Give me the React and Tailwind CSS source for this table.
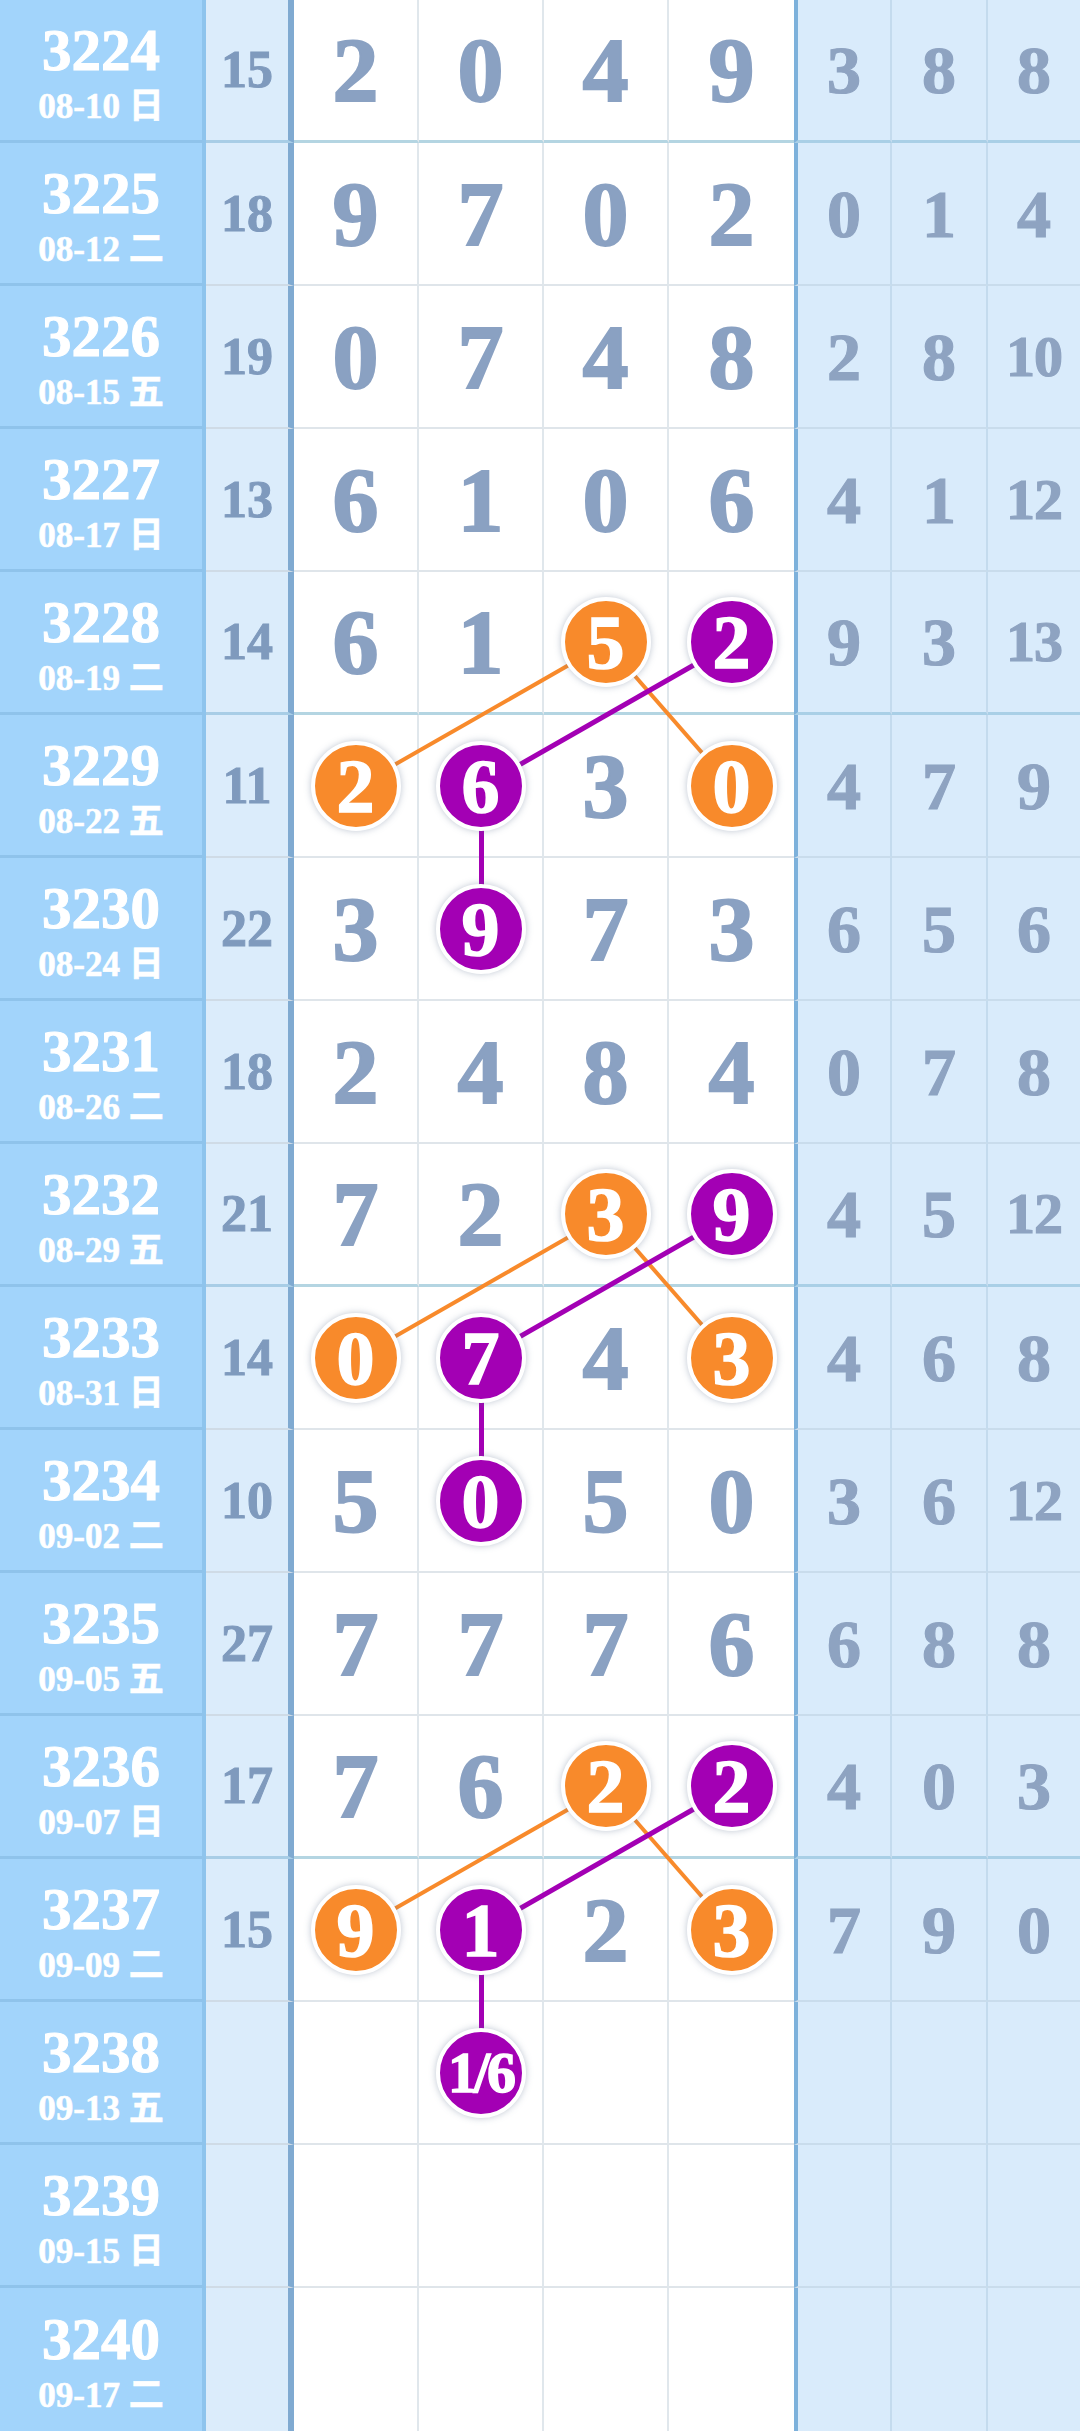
import React from 'react';

const ROW_H = 143;
const COL_X = [356.5, 481.5, 606.5, 731.5];

const rows = [
  ['3224', '08-10', '日', '15', ['2', '0', '4', '9'], ['3', '8', '8']],
  ['3225', '08-12', '二', '18', ['9', '7', '0', '2'], ['0', '1', '4']],
  ['3226', '08-15', '五', '19', ['0', '7', '4', '8'], ['2', '8', '10']],
  ['3227', '08-17', '日', '13', ['6', '1', '0', '6'], ['4', '1', '12']],
  ['3228', '08-19', '二', '14', ['6', '1', '5', '2'], ['9', '3', '13']],
  ['3229', '08-22', '五', '11', ['2', '6', '3', '0'], ['4', '7', '9']],
  ['3230', '08-24', '日', '22', ['3', '9', '7', '3'], ['6', '5', '6']],
  ['3231', '08-26', '二', '18', ['2', '4', '8', '4'], ['0', '7', '8']],
  ['3232', '08-29', '五', '21', ['7', '2', '3', '9'], ['4', '5', '12']],
  ['3233', '08-31', '日', '14', ['0', '7', '4', '3'], ['4', '6', '8']],
  ['3234', '09-02', '二', '10', ['5', '0', '5', '0'], ['3', '6', '12']],
  ['3235', '09-05', '五', '27', ['7', '7', '7', '6'], ['6', '8', '8']],
  ['3236', '09-07', '日', '17', ['7', '6', '2', '2'], ['4', '0', '3']],
  ['3237', '09-09', '二', '15', ['9', '1', '2', '3'], ['7', '9', '0']],
  ['3238', '09-13', '五', '', ['', '1/6', '', ''], ['', '', '']],
  ['3239', '09-15', '日', '', ['', '', '', ''], ['', '', '']],
  ['3240', '09-17', '二', '', ['', '', '', ''], ['', '', '']],
];

// o = orange, p = purple
const balls = {
  4: { 2: 'o', 3: 'p' },
  5: { 0: 'o', 1: 'p', 3: 'o' },
  6: { 1: 'p' },
  8: { 2: 'o', 3: 'p' },
  9: { 0: 'o', 1: 'p', 3: 'o' },
  10: { 1: 'p' },
  12: { 2: 'o', 3: 'p' },
  13: { 0: 'o', 1: 'p', 3: 'o' },
  14: { 1: 'p' },
};

const groupLine = (i) => i === 0 || i === 4 || i === 8 || i === 12;

const cy = (r) => r * ROW_H + 71.5;

const Ball = ({ kind, value }) => (
  <div
    className={`relative z-10 w-[90px] h-[90px] rounded-full border-[4px] border-white shadow-[0_0_7px_rgba(90,110,140,0.4)] flex items-center justify-center text-white font-bold leading-none [-webkit-text-stroke:1.5px_white] ${kind === 'o' ? 'bg-[#f88a2b]' : 'bg-[#a300b4]'} ${value.length > 1 ? 'text-[58px] tracking-[-3px]' : 'text-[76px]'}`}
  >
    {value}
  </div>
);

const Row = ({ row, i }) => {
  const [issue, date, day, sum, nums, tail] = row;
  const g = groupLine(i);
  const last = i === rows.length - 1;
  return (
    <div className="flex h-[143px]">
      <div
        className={`w-[206px] shrink-0 bg-[#a2d4fb] border-r-[4px] border-r-[#8ec4ed] flex flex-col items-center justify-center gap-[9px] pt-[4px] text-white font-bold ${last ? '' : 'border-b-[3px] border-b-[#8fc3eb]'}`}
      >
        <div className="text-[59px] leading-none [-webkit-text-stroke:1px_white]">{issue}</div>
        <div className="text-[35px] leading-none font-['Liberation_Serif','Noto_Sans_CJK_SC',serif] [-webkit-text-stroke:0.6px_white]">
          {date} {day}
        </div>
      </div>
      <div
        className={`w-[88px] shrink-0 bg-[#dbecfb] border-r-[6px] border-r-[#80aad1] flex items-center justify-center text-[52px] font-bold text-[#7f9abd] leading-none [-webkit-text-stroke:1px_#7f9abd] ${last ? '' : g ? 'border-b-[3px] border-b-[#a8cde6]' : 'border-b-[2px] border-b-[#cfdbe6]'}`}
      >
        {sum}
      </div>
      {nums.map((n, c) => {
        const b = balls[i] && balls[i][c];
        return (
          <div
            key={c}
            className={`w-[125px] shrink-0 bg-white flex items-center justify-center text-[#8aa1c2] font-bold leading-none ${c < 3 ? 'border-r-[2px] border-r-[#e0e7ec]' : ''} ${last ? '' : g ? 'border-b-[3px] border-b-[#b4d5e2]' : 'border-b-[2px] border-b-[#dfe5ea]'}`}
          >
            {b ? (
              <Ball kind={b} value={n} />
            ) : (
              <span className="text-[92px] [-webkit-text-stroke:2px_#8aa1c2]">{n}</span>
            )}
          </div>
        );
      })}
      {tail.map((n, c) => (
        <div
          key={c}
          className={`shrink-0 bg-[#d9ebfb] flex items-center justify-center text-[#8ea3c1] font-bold leading-none [-webkit-text-stroke:1.2px_#8ea3c1] ${c === 0 ? 'w-[98px] border-l-[4px] border-l-[#7db1db]' : c === 1 ? 'w-[96px]' : 'w-[92px]'} ${c < 2 ? 'border-r-[2px] border-r-[#c4dbee]' : ''} ${last ? '' : g ? 'border-b-[3px] border-b-[#a9cfe6]' : 'border-b-[2px] border-b-[#c9dcec]'} ${n.length > 1 ? 'text-[58px] tracking-[-1px]' : 'text-[68px]'}`}
        >
          {n}
        </div>
      ))}
    </div>
  );
};

const links = [];
[4, 8, 12].forEach((r) => {
  links.push({ x1: COL_X[2], y1: cy(r), x2: COL_X[0], y2: cy(r + 1), color: '#f88a2b', w: 4 });
  links.push({ x1: COL_X[2], y1: cy(r), x2: COL_X[3], y2: cy(r + 1), color: '#f88a2b', w: 4 });
  links.push({ x1: COL_X[3], y1: cy(r), x2: COL_X[1], y2: cy(r + 1), color: '#a300b4', w: 5 });
  links.push({ x1: COL_X[1], y1: cy(r + 1), x2: COL_X[1], y2: cy(r + 2), color: '#a300b4', w: 5 });
});

export default function App() {
  return (
    <div className="relative w-[1080px] h-[2432px] overflow-hidden bg-white font-['Liberation_Serif',serif]">
      {rows.map((row, i) => (
        <Row key={row[0]} row={row} i={i} />
      ))}
      <svg
        className="absolute top-0 left-0 pointer-events-none"
        width="1080"
        height="2432"
        viewBox="0 0 1080 2432"
      >
        {links.map((l, k) => (
          <line key={k} x1={l.x1} y1={l.y1} x2={l.x2} y2={l.y2} stroke={l.color} strokeWidth={l.w} />
        ))}
      </svg>
    </div>
  );
}
